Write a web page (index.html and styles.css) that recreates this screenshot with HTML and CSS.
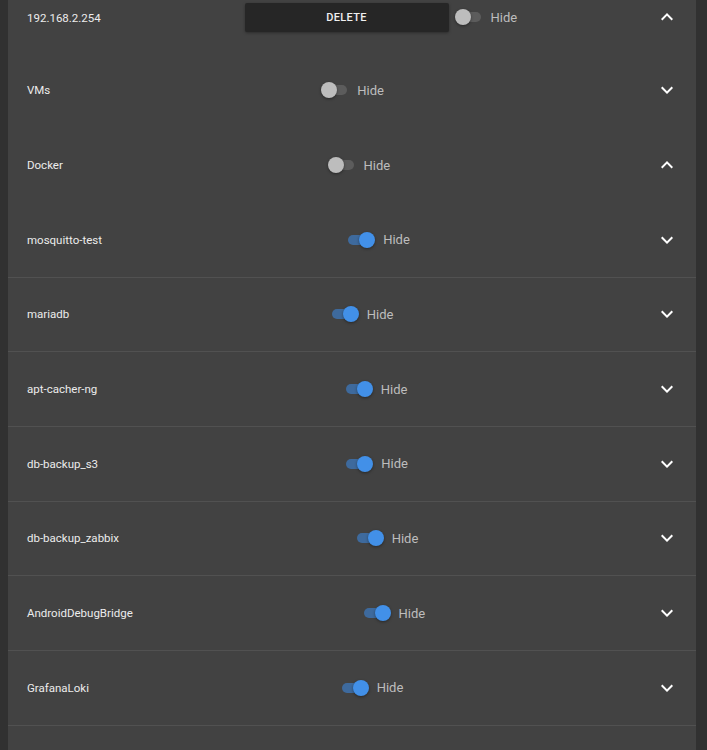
FILE: index.html
```html
<!DOCTYPE html>
<html lang="en">
<head>
  <meta charset="UTF-8" />
  <meta name="viewport" content="width=device-width, initial-scale=1.0" />
  <title>Sidebar items</title>
  <link rel="stylesheet" href="styles.css">
</head>
<body>
  <div class="panel">

    <div class="row first">
      <div class="label">192.168.2.254</div>
      <div class="ctrl">
        <button class="btn-delete">DELETE</button>
        <div class="switch"><span class="track"></span><span class="thumb"></span></div>
        <span class="hide">Hide</span>
      </div>
      <svg class="chev" viewBox="0 0 24 24"><path d="M12 8l-6 6 1.41 1.41L12 10.83l4.59 4.58L18 14z"/></svg>
    </div>

    <div class="row">
      <div class="label">VMs</div>
      <div class="ctrl">
        <div class="switch"><span class="track"></span><span class="thumb"></span></div>
        <span class="hide">Hide</span>
      </div>
      <svg class="chev" viewBox="0 0 24 24"><path d="M7.41 8.59L12 13.17l4.59-4.58L18 10l-6 6-6-6 1.41-1.41z"/></svg>
    </div>

    <div class="row">
      <div class="label">Docker</div>
      <div class="ctrl">
        <div class="switch"><span class="track"></span><span class="thumb"></span></div>
        <span class="hide">Hide</span>
      </div>
      <svg class="chev" viewBox="0 0 24 24"><path d="M12 8l-6 6 1.41 1.41L12 10.83l4.59 4.58L18 14z"/></svg>
    </div>

    <div class="row child">
      <div class="label">mosquitto-test</div>
      <div class="ctrl">
        <div class="switch on"><span class="track"></span><span class="thumb"></span></div>
        <span class="hide">Hide</span>
      </div>
      <svg class="chev" viewBox="0 0 24 24"><path d="M7.41 8.59L12 13.17l4.59-4.58L18 10l-6 6-6-6 1.41-1.41z"/></svg>
    </div>

    <div class="row child">
      <div class="label">mariadb</div>
      <div class="ctrl">
        <div class="switch on"><span class="track"></span><span class="thumb"></span></div>
        <span class="hide">Hide</span>
      </div>
      <svg class="chev" viewBox="0 0 24 24"><path d="M7.41 8.59L12 13.17l4.59-4.58L18 10l-6 6-6-6 1.41-1.41z"/></svg>
    </div>

    <div class="row child">
      <div class="label">apt-cacher-ng</div>
      <div class="ctrl">
        <div class="switch on"><span class="track"></span><span class="thumb"></span></div>
        <span class="hide">Hide</span>
      </div>
      <svg class="chev" viewBox="0 0 24 24"><path d="M7.41 8.59L12 13.17l4.59-4.58L18 10l-6 6-6-6 1.41-1.41z"/></svg>
    </div>

    <div class="row child">
      <div class="label">db-backup_s3</div>
      <div class="ctrl">
        <div class="switch on"><span class="track"></span><span class="thumb"></span></div>
        <span class="hide">Hide</span>
      </div>
      <svg class="chev" viewBox="0 0 24 24"><path d="M7.41 8.59L12 13.17l4.59-4.58L18 10l-6 6-6-6 1.41-1.41z"/></svg>
    </div>

    <div class="row child">
      <div class="label">db-backup_zabbix</div>
      <div class="ctrl">
        <div class="switch on"><span class="track"></span><span class="thumb"></span></div>
        <span class="hide">Hide</span>
      </div>
      <svg class="chev" viewBox="0 0 24 24"><path d="M7.41 8.59L12 13.17l4.59-4.58L18 10l-6 6-6-6 1.41-1.41z"/></svg>
    </div>

    <div class="row child">
      <div class="label">AndroidDebugBridge</div>
      <div class="ctrl">
        <div class="switch on"><span class="track"></span><span class="thumb"></span></div>
        <span class="hide">Hide</span>
      </div>
      <svg class="chev" viewBox="0 0 24 24"><path d="M7.41 8.59L12 13.17l4.59-4.58L18 10l-6 6-6-6 1.41-1.41z"/></svg>
    </div>

    <div class="row child">
      <div class="label">GrafanaLoki</div>
      <div class="ctrl">
        <div class="switch on"><span class="track"></span><span class="thumb"></span></div>
        <span class="hide">Hide</span>
      </div>
      <svg class="chev" viewBox="0 0 24 24"><path d="M7.41 8.59L12 13.17l4.59-4.58L18 10l-6 6-6-6 1.41-1.41z"/></svg>
    </div>

  </div>
</body>
</html>
```

FILE: styles.css
```css
html, body {
  height: 100%;
}

body {
  margin: 0;
  padding: 0 11px 0 8px;
  background: #313131;
  font-family: Roboto, 'Liberation Sans', sans-serif;
  overflow: hidden;
}

.panel {
  background: #424242;
  min-height: calc(100% + 21px);
  margin-top: -21px;
}

.row {
  display: flex;
  align-items: center;
  justify-content: space-between;
  height: 73.67px;
  padding: 0 17px 0 19px;
  border-bottom: 1px solid transparent;
}

.row.first {
  height: 70.67px;
  padding-top: 3px;
}

.row.first .label {
  margin-top: 2px;
}

.row.first .ctrl {
  margin-left: 6px;
}

.row.child {
  border-bottom-color: #515151;
}

.label {
  font-size: 11.5px;
  color: #ececec;
}

.ctrl {
  display: flex;
  align-items: center;
}

.btn-delete {
  width: 204px;
  height: 29px;
  margin-right: 6px;
  background: #262626;
  border: none;
  border-radius: 2px;
  color: #f0f0f0;
  font-family: Roboto, 'Liberation Sans', sans-serif;
  font-size: 11px;
  font-weight: 500;
  letter-spacing: 0.3px;
  box-shadow: 0 1px 3px rgba(0, 0, 0, 0.35);
}

.switch {
  position: relative;
  width: 28px;
  height: 16px;
  margin-right: 8px;
}

.switch .track {
  position: absolute;
  left: 1px;
  top: 3px;
  width: 25px;
  height: 10px;
  border-radius: 5px;
  background: #5c5c5c;
}

.switch .thumb {
  position: absolute;
  left: 0;
  top: 0;
  width: 16px;
  height: 16px;
  border-radius: 50%;
  background: #bdbdbd;
  box-shadow: 0 1px 3px rgba(0, 0, 0, 0.4);
}

.switch.on .track {
  background: #3e6a9d;
}

.switch.on .thumb {
  left: 12px;
  background: #4290e8;
}

.hide {
  font-size: 13px;
  color: #bdbdbd;
}

.chev {
  width: 24px;
  height: 24px;
  fill: #ffffff;
}
```
